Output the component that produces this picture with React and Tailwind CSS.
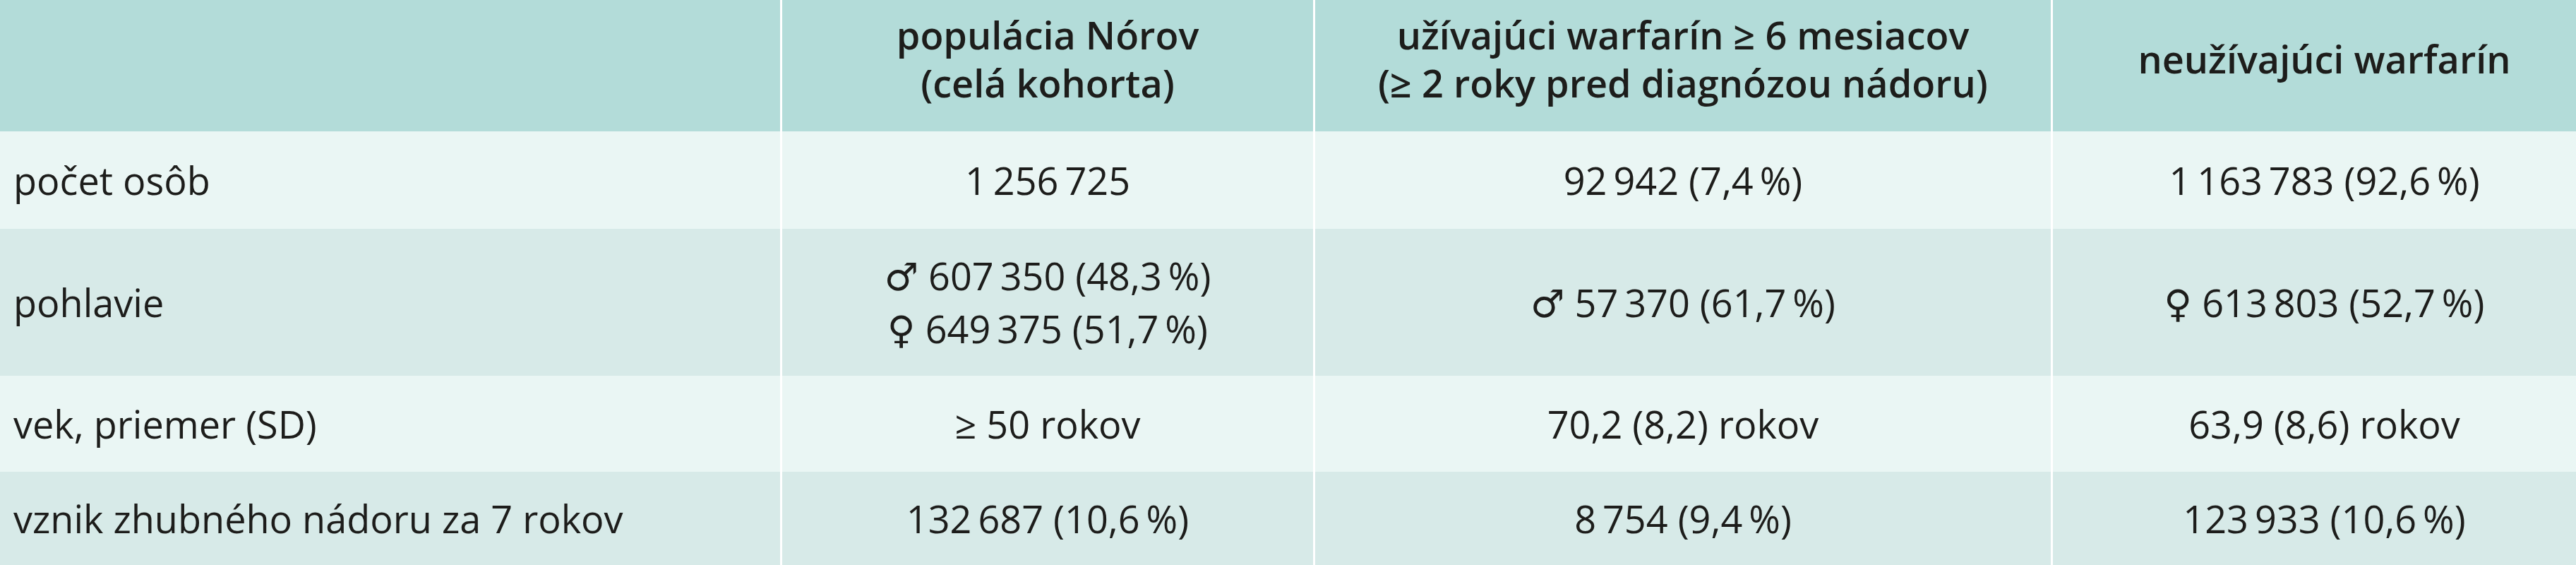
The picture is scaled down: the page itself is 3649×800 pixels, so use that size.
import React from "react";

const T = "\u2009";

const rows = [
  {
    label: "počet osôb",
    bg: "bg-[#eaf6f4]",
    h: "h-[138px]",
    cells: [[`1${T}256${T}725`], [`92${T}942 (7,4${T}%)`], [`1${T}163${T}783 (92,6${T}%)`]],
  },
  {
    label: "pohlavie",
    bg: "bg-[#d7eae8]",
    h: "h-[208px]",
    cells: [
      [`♂ 607${T}350 (48,3${T}%)`, `♀ 649${T}375 (51,7${T}%)`],
      [`♂ 57${T}370 (61,7${T}%)`],
      [`♀ 613${T}803 (52,7${T}%)`],
    ],
  },
  {
    label: "vek, priemer (SD)",
    bg: "bg-[#eaf6f4]",
    h: "h-[136px]",
    cells: [["≥ 50 rokov"], ["70,2 (8,2) rokov"], ["63,9 (8,6) rokov"]],
  },
  {
    label: "vznik zhubného nádoru za 7 rokov",
    bg: "bg-[#d7eae8]",
    h: "h-[132px]",
    cells: [[`132${T}687 (10,6${T}%)`], [`8${T}754 (9,4${T}%)`], [`123${T}933 (10,6${T}%)`]],
  },
];

const headers = [
  ["populácia Nórov", "(celá kohorta)"],
  ["užívajúci warfarín ≥ 6 mesiacov", "(≥ 2 roky pred diagnózou nádoru)"],
  ["neužívajúci warfarín"],
];

const colPad = ["", "", "pl-[28px]"];

export default function App() {
  return (
    <div
      className="w-[3649px] h-[800px] overflow-hidden bg-white text-[#1d1d1b] text-[54px]"
      style={{ fontFamily: '"Open Sans", "DejaVu Sans", sans-serif' }}
    >
      <div className="grid grid-cols-[1105px_755px_1045px_744px]">
        {/* header */}
        <div className="h-[186px] bg-[#b3dcd9]"></div>
        {headers.map((lines, i) => (
          <div
            key={i}
            className={`h-[186px] bg-[#b3dcd9] border-l-[3px] border-white flex flex-col items-center justify-center pb-[21px] font-semibold leading-[68px] text-center ${colPad[i]}`}
          >
            {lines.map((l, j) => (
              <div key={j} className="whitespace-nowrap">
                {l}
              </div>
            ))}
          </div>
        ))}

        {/* body */}
        {rows.map((row, r) => (
          <React.Fragment key={r}>
            <div className={`${row.h} ${row.bg} flex items-center pl-[19px] leading-[68px] whitespace-nowrap`}>
              {row.label}
            </div>
            {row.cells.map((lines, i) => (
              <div
                key={i}
                className={`${row.h} ${row.bg} border-l-[3px] border-white flex flex-col items-center justify-center leading-[75px] text-center ${colPad[i]}`}
              >
                {lines.map((l, j) => (
                  <div key={j} className="whitespace-nowrap">
                    {l}
                  </div>
                ))}
              </div>
            ))}
          </React.Fragment>
        ))}
      </div>
    </div>
  );
}
